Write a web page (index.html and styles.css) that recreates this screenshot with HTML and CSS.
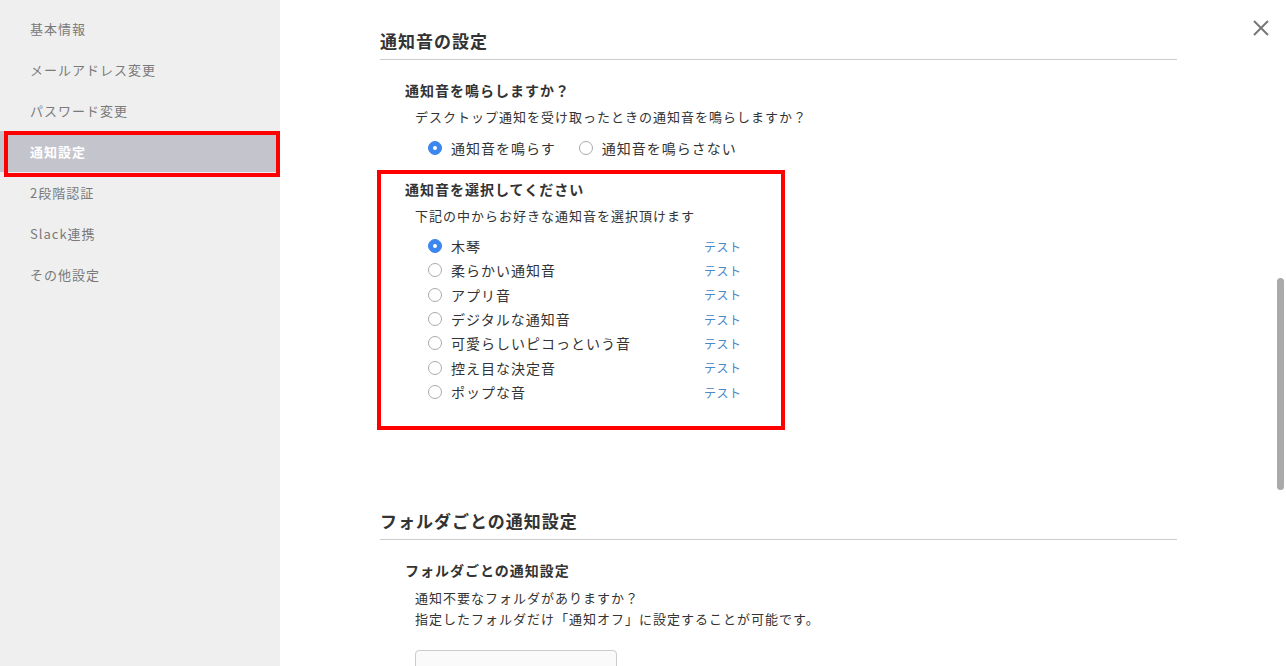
FILE: index.html
```html
<!DOCTYPE html>
<html lang="ja">
<head>
<meta charset="utf-8">
<title>通知設定</title>
<link rel="stylesheet" href="styles.css">
</head>
<body>
<div class="app">
  <nav class="sidebar">
    <a class="nav-item">基本情報</a>
    <a class="nav-item">メールアドレス変更</a>
    <a class="nav-item">パスワード変更</a>
    <a class="nav-item active">通知設定</a>
    <a class="nav-item">2段階認証</a>
    <a class="nav-item">Slack連携</a>
    <a class="nav-item">その他設定</a>
  </nav>
  <main class="main">
    <button class="close" aria-label="閉じる">
      <svg width="18" height="18" viewBox="0 0 18 18"><path d="M2 2 L16 16 M16 2 L2 16" stroke="#777" stroke-width="2" fill="none"/></svg>
    </button>
    <div class="scroll-thumb"></div>
    <div class="content">
      <section class="section">
        <h2 class="section-title">通知音の設定</h2>
        <div class="group">
          <h3 class="group-title">通知音を鳴らしますか？</h3>
          <p class="group-desc">デスクトップ通知を受け取ったときの通知音を鳴らしますか？</p>
          <div class="radio-row">
            <label class="radio"><span class="radio-mark checked"></span><span class="radio-label">通知音を鳴らす</span></label>
            <label class="radio"><span class="radio-mark"></span><span class="radio-label">通知音を鳴らさない</span></label>
          </div>
        </div>
        <div class="group group-highlight">
          <h3 class="group-title">通知音を選択してください</h3>
          <p class="group-desc">下記の中からお好きな通知音を選択頂けます</p>
          <ul class="sound-list">
            <li class="sound"><label class="radio sound-radio"><span class="radio-mark checked"></span><span class="radio-label">木琴</span></label><a class="test">テスト</a></li>
            <li class="sound"><label class="radio sound-radio"><span class="radio-mark"></span><span class="radio-label">柔らかい通知音</span></label><a class="test">テスト</a></li>
            <li class="sound"><label class="radio sound-radio"><span class="radio-mark"></span><span class="radio-label">アプリ音</span></label><a class="test">テスト</a></li>
            <li class="sound"><label class="radio sound-radio"><span class="radio-mark"></span><span class="radio-label">デジタルな通知音</span></label><a class="test">テスト</a></li>
            <li class="sound"><label class="radio sound-radio"><span class="radio-mark"></span><span class="radio-label">可愛らしいピコっという音</span></label><a class="test">テスト</a></li>
            <li class="sound"><label class="radio sound-radio"><span class="radio-mark"></span><span class="radio-label">控え目な決定音</span></label><a class="test">テスト</a></li>
            <li class="sound"><label class="radio sound-radio"><span class="radio-mark"></span><span class="radio-label">ポップな音</span></label><a class="test">テスト</a></li>
          </ul>
        </div>
      </section>
      <section class="section section-folder">
        <h2 class="section-title">フォルダごとの通知設定</h2>
        <div class="group">
          <h3 class="group-title">フォルダごとの通知設定</h3>
          <p class="group-desc lines">通知不要なフォルダがありますか？<br>指定したフォルダだけ「通知オフ」に設定することが可能です。</p>
          <div class="folder-box"></div>
        </div>
      </section>
    </div>
  </main>
</div>
</body>
</html>
```
FILE: styles.css
```css
* { box-sizing: border-box; }
html, body {
  margin: 0;
  padding: 0;
  height: 666px;
  overflow: hidden;
}
body {
  font-family: "Noto Sans CJK JP", "Noto Sans", sans-serif;
  color: #333;
  background: #fff;
}
.app {
  display: flex;
  height: 666px;
}
.sidebar {
  width: 280px;
  flex: 0 0 280px;
  background: #efefef;
  padding-top: 8px;
  display: flex;
  flex-direction: column;
}
.nav-item {
  position: relative;
  display: block;
  height: 41px;
  line-height: 41px;
  padding-left: 30px;
  font-size: 13px;
  letter-spacing: 1px;
  color: #7a7a7a;
  cursor: pointer;
}
.nav-item.active {
  background: #c4c5cc;
  color: #fff;
  font-weight: 700;
}
.nav-item.active::after {
  content: "";
  position: absolute;
  top: 0;
  left: 4px;
  right: 0;
  bottom: -5px;
  border: 4px solid #ff0000;
}
.main {
  position: relative;
  flex: 1;
  height: 666px;
  overflow: hidden;
  background: #fff;
}
.close {
  position: absolute;
  top: 19px;
  right: 16px;
  width: 18px;
  height: 18px;
  padding: 0;
  border: 0;
  background: none;
  display: flex;
}
.scroll-thumb {
  position: absolute;
  top: 278px;
  right: 2px;
  width: 7px;
  height: 212px;
  border-radius: 4px;
  background: #aaa;
}
.content {
  width: 797px;
  margin-left: 100px;
  padding-top: 29px;
}
.section-title {
  margin: 0;
  font-size: 17px;
  letter-spacing: 1px;
  line-height: 24px;
  font-weight: 700;
  color: #333;
  padding-bottom: 6px;
  border-bottom: 1px solid #ccc;
}
.group {
  margin-top: 19px;
  padding-left: 25px;
}
.group-title {
  margin: 0;
  font-size: 14px;
  letter-spacing: 1px;
  line-height: 22px;
  font-weight: 700;
  color: #333;
}
.group-desc {
  margin: 6px 0 0;
  padding-left: 10px;
  font-size: 13px;
  letter-spacing: 1px;
  line-height: 20px;
  color: #333;
}
.group-desc.lines { line-height: 21px; }
.radio-row {
  display: flex;
  gap: 23px;
  margin-top: 10px;
  padding-left: 23px;
  height: 22px;
  align-items: center;
}
.radio {
  display: flex;
  align-items: center;
  gap: 9px;
}
.radio-mark {
  width: 14px;
  height: 14px;
  border-radius: 50%;
  border: 1px solid #aaa;
  background: #fff;
  flex: 0 0 14px;
  display: flex;
  align-items: center;
  justify-content: center;
}
.radio-mark.checked {
  border-color: #3b86ef;
  background: #3b86ef;
}
.radio-mark.checked::after {
  content: "";
  width: 4px;
  height: 4px;
  border-radius: 50%;
  background: #fff;
}
.radio-label {
  font-size: 14px;
  letter-spacing: 1px;
  color: #333;
}
.group-highlight {
  margin-top: 11px;
  margin-left: -3px;
  width: 408px;
  border: 4px solid #ff0000;
  padding: 4px 0 22px 24px;
}
.sound-list {
  list-style: none;
  margin: 8px 0 0;
  padding: 0 0 0 23px;
}
.sound {
  display: flex;
  align-items: center;
  height: 24.33px;
}
.sound-radio {
  width: 276px;
}
.test {
  font-size: 12px;
  letter-spacing: 0.5px;
  color: #4a89c8;
  cursor: pointer;
}
.section-folder {
  margin-top: 79px;
}
.folder-box {
  margin-top: 21px;
  margin-left: 10px;
  width: 202px;
  height: 60px;
  border: 1px solid #ccc;
  border-radius: 4px;
  background: #fafafa;
}
```
